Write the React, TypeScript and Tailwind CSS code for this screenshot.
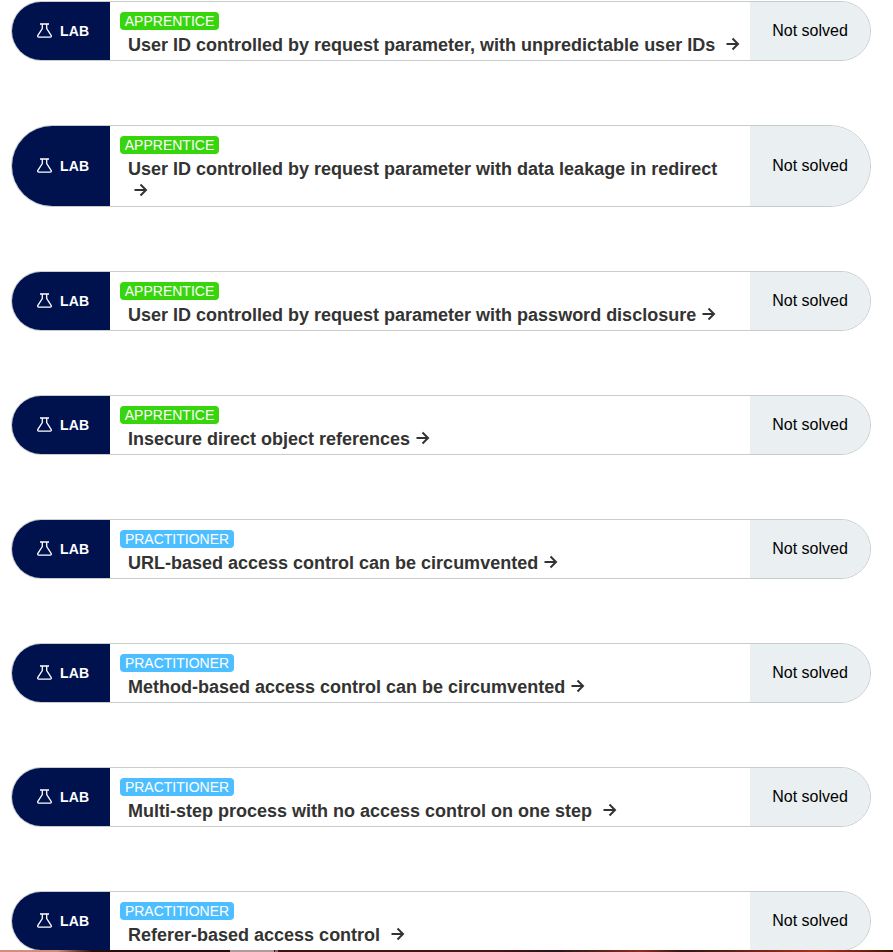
type Level = 'APPRENTICE' | 'PRACTITIONER';

interface Lab {
  level: Level;
  title: string;
  arrow: string;
  tall?: boolean;
}

const labs: Lab[] = [
  { level: 'APPRENTICE', title: 'User ID controlled by request parameter, with unpredictable user IDs', arrow: 'ml-[11px]' },
  { level: 'APPRENTICE', title: 'User ID controlled by request parameter with data leakage in redirect', arrow: 'ml-[6px]', tall: true },
  { level: 'APPRENTICE', title: 'User ID controlled by request parameter with password disclosure', arrow: 'ml-[6px]' },
  { level: 'APPRENTICE', title: 'Insecure direct object references', arrow: 'ml-[6px]' },
  { level: 'PRACTITIONER', title: 'URL-based access control can be circumvented', arrow: 'ml-[6px]' },
  { level: 'PRACTITIONER', title: 'Method-based access control can be circumvented', arrow: 'ml-[6px]' },
  { level: 'PRACTITIONER', title: 'Multi-step process with no access control on one step', arrow: 'ml-[11px]' },
  { level: 'PRACTITIONER', title: 'Referer-based access control', arrow: 'ml-[11px]' },
];

function Flask() {
  return (
    <svg width="16" height="16" viewBox="0 0 16 16" fill="none" stroke="#fff" strokeWidth="1.3" className="shrink-0">
      <path d="M4 1h9M6.300 1v4.600L1.900 12.300c-.5.900-.2 1.900.9 1.900h11.400c1.100 0 1.400-1 .9-1.900L10.700 5.600V1" />
    </svg>
  );
}

function Arrow({ className }: { className: string }) {
  return (
    <svg width="14" height="14" viewBox="0 0 14 14" fill="none" stroke="#333332" strokeWidth="2" className={`shrink-0 ${className}`}>
      <path d="M0.500 7h11.500M6.500 1.500l5.500 5.500-5.500 5.500" />
    </svg>
  );
}

function LabRow({ lab }: { lab: Lab }) {
  const badge =
    lab.level === 'APPRENTICE' ? 'w-[99px] bg-[#37d50c]' : 'w-[114px] bg-[#4dbeff]';
  return (
    <div
      className={`flex w-[860px] shrink-0 overflow-hidden rounded-full border border-[#c8cccd] bg-white ${lab.tall ? 'h-[82px]' : 'h-[60px]'}`}
    >
      <div className="flex w-[98px] shrink-0 items-center bg-[#00124e] pl-[24px] text-white">
        <Flask />
        <span className="ml-[8px] text-[14px] leading-[16px] font-bold tracking-[0.2px]">LAB</span>
      </div>
      <div className="flex w-[640px] shrink-0 flex-col pt-[10px] pl-[10px]">
        <div className={`flex h-[18px] items-center justify-center rounded-[4px] text-[14px] leading-[18px] text-white ${badge}`}>
          {lab.level}
        </div>
        <div className="mt-[5px] flex items-start pl-[8px] text-[18px] leading-[21px] font-bold whitespace-nowrap text-[#333332]">
          <span>{lab.title}</span>
          {!lab.tall && <Arrow className={`mt-[2px] ${lab.arrow}`} />}
        </div>
        {lab.tall && <Arrow className="mt-[3px] ml-[14px]" />}
      </div>
      <div className="flex flex-1 items-center justify-center bg-[#eaeff2] text-[16px] leading-[20px] text-black">
        Not solved
      </div>
    </div>
  );
}

export default function App() {
  return (
    <div className="flex h-[952px] w-[893px] flex-col overflow-hidden bg-white font-['Liberation_Sans',Arial,sans-serif]">
      <div className="flex h-[950px] shrink-0 flex-col gap-[64px] overflow-hidden pt-px pl-[11px]">
        {labs.map((lab) => (
          <LabRow key={lab.title} lab={lab} />
        ))}
      </div>
      <div className="flex h-[2px] shrink-0">
        <div className="w-[230px] bg-linear-to-r from-[#d38d7b] from-25% via-[#2a0d0b] via-40% to-[#2a0d0b]" />
        <div className="w-[44px] bg-[#b39a9a]" />
        <div className="w-px bg-[#431012]" />
        <div className="w-[3px] bg-[#8e6a6b]" />
        <div className="flex-1 bg-[linear-gradient(90deg,#431012_0%,#4c1517_35%,#281516_45%,#8c2d22_59%,#351513_66%,#a93419_88%,#451507_100%)]" />
      </div>
    </div>
  );
}
